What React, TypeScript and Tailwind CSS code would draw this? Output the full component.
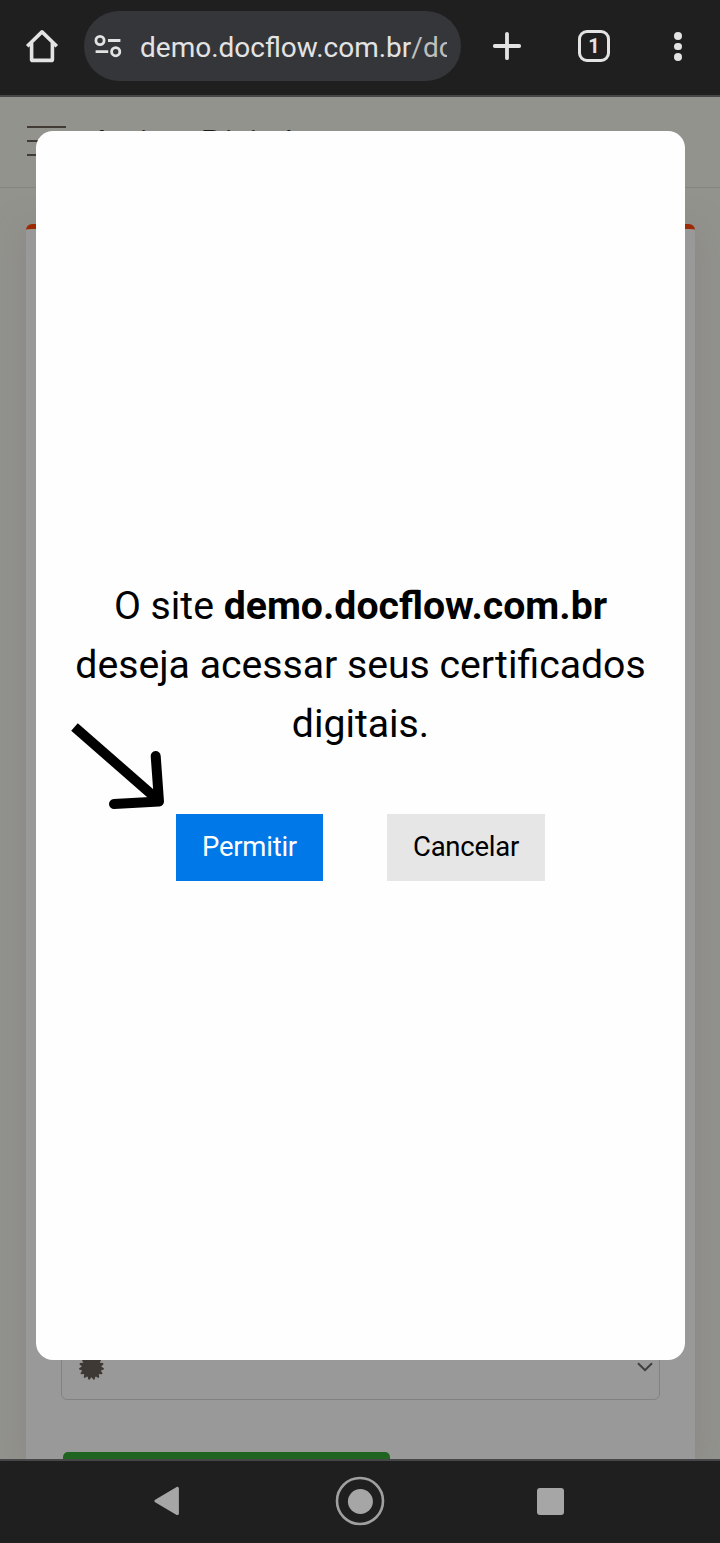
function BrowserBar() {
    return (
        <header className="flex h-[97px] shrink-0 items-start border-b-2 border-[#464648] bg-[#1f1f1f] pt-[11px] text-[#e3e3e3]">
            <svg className="mt-[17px] ml-6 h-9 w-9" viewBox="0 0 36 36" fill="none" stroke="currentColor" strokeWidth="3.6" strokeLinejoin="round">
                <path d="M3.2 18.2 18 3.9 32.8 18.2M7.6 15v16.4q0 1 1 1h18.8q1 0 1-1V15" />
            </svg>
            <div className="ml-6 flex h-[70px] w-[377px] items-center rounded-full bg-[#35363a] pl-[10px]">
                <svg className="h-6 w-7" viewBox="0 0 28 24" fill="none" stroke="currentColor" strokeWidth="2.8">
                    <circle cx="6" cy="6.5" r="4.1" />
                    <path d="M14 6.5h12.4M1.6 17.7h12.6" />
                    <circle cx="21.7" cy="17.7" r="4.1" />
                </svg>
                <div className="mt-[3px] ml-[18px] w-[307px] overflow-hidden text-[28px] leading-10 whitespace-nowrap">
                    demo.docflow.com.br<span className="text-[#bebebe]">/dc</span>
                </div>
            </div>
            <svg className="mt-[20px] ml-[31px] h-[30px] w-[30px]" viewBox="0 0 30 30" stroke="currentColor" strokeWidth="3.8" strokeLinecap="round">
                <path d="M15 2.8v24.4M2.8 15h24.4" />
            </svg>
            <div className="mt-[19px] ml-14 flex h-8 w-8 items-center justify-center rounded-[9px] border-[3.5px] border-[#e3e3e3] text-[20px] font-bold">
                1
            </div>
            <div className="mt-[21px] ml-16 flex flex-col gap-[3px]">
                <span className="h-[7.6px] w-[7.6px] rounded-full bg-[#e3e3e3]" />
                <span className="h-[7.6px] w-[7.6px] rounded-full bg-[#e3e3e3]" />
                <span className="h-[7.6px] w-[7.6px] rounded-full bg-[#e3e3e3]" />
            </div>
        </header>
    );
}

function PageBehind() {
    return (
        <div className="flex h-full flex-col">
            <div className="flex h-[91px] shrink-0 items-start border-b border-[#858580] pl-[27px]">
                <div className="mt-[29px] flex w-[39px] flex-col gap-3">
                    <span className="h-0.5 bg-[#413a35]" />
                    <span className="h-0.5 bg-[#413a35]" />
                    <span className="h-0.5 bg-[#413a35]" />
                </div>
                <h1 className="mt-[25px] ml-[25px] font-['Lato'] text-[32px] leading-10 tracking-[0.2px] text-[#1c1c1a]">
                    <span className="tracking-[-0.2px]">Assinar</span> Digitalmente
                </h1>
            </div>
            <div className="mx-[26px] mt-9 mr-[25px] flex flex-1 flex-col justify-end rounded-t-md border-t-[5px] border-[#9c2a02] bg-[#999999] pl-[35px] shadow-[0_6px_30px_rgba(135,120,125,0.5)]">
                <div className="flex h-[66px] w-[599px] items-center justify-between rounded-md border border-[#828282] pr-[6px] pl-[17px]">
                    <svg className="h-[25px] w-[25px]" viewBox="-12.5 -12.5 25 25" fill="#3e3935">
                        <circle r="9.8" />
                        {[0, 24, 48, 72, 96, 120, 144, 168, 192, 216, 240, 264, 288, 312, 336].map((angle) => (
                            <path key={angle} d="M-2.2 9 -.6 12.4h1.2L2.2 9z" transform={`rotate(${angle + 12})`} />
                        ))}
                    </svg>
                    <svg className="h-4 w-4" viewBox="0 0 16 16" fill="none" stroke="#3e3e3c" strokeWidth="2">
                        <path d="m1 4.2 7 7 7-7" />
                    </svg>
                </div>
                <div className="mt-[52px] ml-[2px] h-[7px] w-[327px] rounded-t-[5px] bg-[#206422]" />
            </div>
        </div>
    );
}

function PermissionDialog() {
    return (
        <div className="absolute top-[34px] left-9 flex h-[1229px] w-[649px] flex-col items-center rounded-[17px] bg-[#fefefe] pt-[446px] text-black">
            <p className="text-center text-[39.2px] leading-[59px] whitespace-nowrap">
                O site <b>demo.docflow.com.br</b>
                <br />
                deseja acessar seus certificados
                <br />
                digitais.
            </p>
            <div className="mt-[60px] flex gap-16 text-[27.5px] tracking-[-0.25px]">
                <button className="h-[67px] w-[147px] bg-[#0078e7] pb-[2px] text-white">Permitir</button>
                <button className="h-[67px] w-[158px] bg-[#e6e6e6] pb-[2px]">Cancelar</button>
            </div>
            {/* hand-drawn arrow pointing at the allow button */}
            <svg className="absolute top-[586px] left-[30px] h-[98px] w-[104px]" viewBox="0 0 104 98" fill="none" stroke="black" strokeWidth="10">
                <path d="M8.5 10 92 83" />
                <path d="M89.7 39 93 84.5 48 87" strokeLinecap="round" strokeLinejoin="round" />
            </svg>
        </div>
    );
}

function AndroidNav() {
    return (
        <nav className="flex h-[84px] shrink-0 items-center border-t-2 border-[#464648] bg-[#1f1f1f] pb-[2px]">
            <svg className="ml-[153px] h-[30px] w-7" viewBox="0 0 28 30" fill="#a6a6a6" stroke="#a6a6a6" strokeWidth="3" strokeLinejoin="round">
                <path d="M2.9 15 24.4 2.4v25.2z" />
            </svg>
            <svg className="ml-[154px] h-[50px] w-[50px]" viewBox="0 0 50 50">
                <circle cx="25" cy="25" r="23" fill="none" stroke="#a0a0a0" strokeWidth="2.6" />
                <circle cx="25.4" cy="25.5" r="12.5" fill="#a6a6a6" />
            </svg>
            <div className="ml-[152px] h-[27px] w-[27px] rounded-[3px] bg-[#a6a6a6]" />
        </nav>
    );
}

export default function App() {
    return (
        <div className="flex h-[1543px] w-[720px] flex-col overflow-hidden font-['Roboto',sans-serif]">
            <BrowserBar />
            <main className="relative h-[1362px] overflow-hidden bg-[#92938d]">
                <PageBehind />
                <PermissionDialog />
            </main>
            <AndroidNav />
        </div>
    );
}
